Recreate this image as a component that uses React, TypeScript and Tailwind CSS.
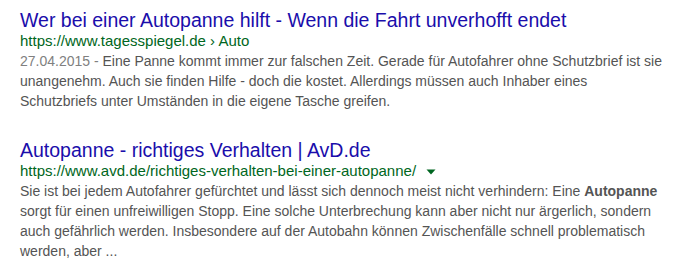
const RESULTS = [
  {
    title: "Wer bei einer Autopanne hilft - Wenn die Fahrt unverhofft endet",
    url: "https://www.tagesspiegel.de › Auto",
    arrow: false,
  },
  {
    title: "Autopanne - richtiges Verhalten | AvD.de",
    url: "https://www.avd.de/richtiges-verhalten-bei-einer-autopanne/",
    arrow: true,
  },
];

export default function App() {
  return (
    <div className="h-[276px] w-[700px] bg-white pl-5 pt-[9px] font-['Liberation_Sans',Arial,sans-serif]">
      <Result {...RESULTS[0]}>
        <span className="text-[#808080]">27.04.2015 - </span>
        Eine Panne kommt immer zur falschen Zeit. Gerade für Autofahrer ohne Schutzbrief ist sie
        <br />
        unangenehm. Auch sie finden Hilfe - doch die kostet. Allerdings müssen auch Inhaber eines
        <br />
        Schutzbriefs unter Umständen in die eigene Tasche greifen.
      </Result>
      <div className="mt-7">
        <Result {...RESULTS[1]}>
          Sie ist bei jedem Autofahrer gefürchtet und lässt sich dennoch meist nicht verhindern: Eine{" "}
          <b className="font-bold">Autopanne</b>
          <br />
          sorgt für einen unfreiwilligen Stopp. Eine solche Unterbrechung kann aber nicht nur ärgerlich, sondern
          <br />
          auch gefährlich werden. Insbesondere auf der Autobahn können Zwischenfälle schnell problematisch
          <br />
          werden, aber ...
        </Result>
      </div>
    </div>
  );
}

function Result({
  title,
  url,
  arrow,
  children,
}: {
  title: string;
  url: string;
  arrow: boolean;
  children: React.ReactNode;
}) {
  return (
    <div>
      <h3 className="whitespace-nowrap text-[19.5px] leading-[22px] text-[#1a0dab]">{title}</h3>
      <div className="flex items-center whitespace-nowrap text-[15px] leading-[20px] text-[#006621]">
        {url}
        {arrow && (
          <svg width="10" height="6" viewBox="0 0 10 6" className="ml-[10px] mt-[1px]">
            <path d="M0.5 0.5h9L5 5.5z" fill="#006621" />
          </svg>
        )}
      </div>
      <p className="whitespace-nowrap text-[14px] leading-[20px] text-[#545454]">{children}</p>
    </div>
  );
}
